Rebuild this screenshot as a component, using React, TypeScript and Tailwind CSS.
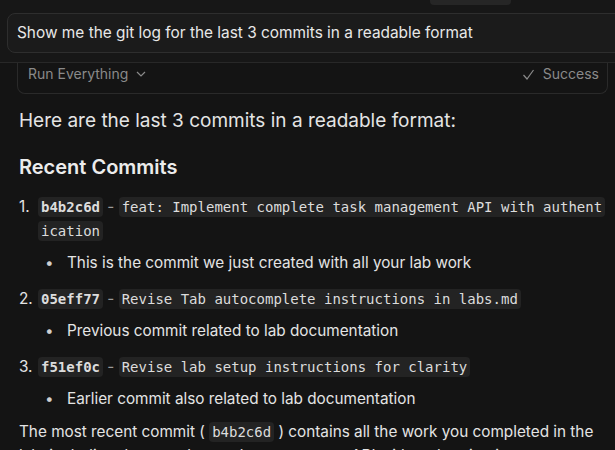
const mono = "font-['DejaVu_Sans_Mono',monospace]"

function Code({ children, bold }: { children: React.ReactNode; bold?: boolean }) {
  return (
    <code
      className={`${mono} rounded-[4px] bg-[#232323] px-[3px] py-[2px] text-[14px] text-[#dcdcdc] [box-decoration-break:clone] ${
        bold ? "font-bold" : ""
      }`}
    >
      {children}
    </code>
  )
}

const commits = [
  {
    hash: "b4b2c6d",
    msg: "feat: Implement complete task management API with authentication",
    note: "This is the commit we just created with all your lab work",
  },
  {
    hash: "05eff77",
    msg: "Revise Tab autocomplete instructions in labs.md",
    note: "Previous commit related to lab documentation",
  },
  {
    hash: "f51ef0c",
    msg: "Revise lab setup instructions for clarity",
    note: "Earlier commit also related to lab documentation",
  },
]

function App() {
  return (
    <div className="h-[450px] w-full overflow-hidden bg-[#141414] font-['Inter',sans-serif] text-[#e4e4e4]">
      <div className="border-b border-[#282828] bg-[#171717] pb-[9px]">
        <div className="ml-[430px] h-[5px] w-[81px] rounded-b-[4px] bg-[#262626]" />
        <div className="ml-[7px] mt-[8px] flex h-[40px] w-[620px] items-center rounded-[8px] border border-[#2e2e2e] bg-[#1b1b1b] px-[9px] text-[15.4px] text-[#e8e8e8]">
          Show me the git log for the last 3 commits in a readable format
        </div>
      </div>

      <div className="ml-[17px] mr-[7px] flex h-[31px] items-start justify-between rounded-b-[8px] border-x border-b border-[#2a2a2a] pl-[10px] pr-[8px] pt-[1px] text-[14px] leading-[20px] text-[#8a8a8a]">
        <div className="flex items-center gap-[7px]">
          Run Everything
          <svg width="12" height="12" viewBox="0 0 12 12" fill="none" stroke="currentColor" strokeWidth="1.2">
            <path d="M2 4l4 4 4-4" />
          </svg>
        </div>
        <div className="flex items-center gap-[8px]">
          <svg width="13" height="13" viewBox="0 0 13 13" fill="none" stroke="currentColor" strokeWidth="1.2">
            <path d="M1.5 7l3.5 4L11.5 2" />
          </svg>
          Success
        </div>
      </div>

      <div className="pl-[19px] pr-[8px]">
        <p className="mt-[15px] text-[19px] leading-[24px]">Here are the last 3 commits in a readable format:</p>

        <h2 className="mt-[20px] text-[20px] font-semibold leading-[28px] text-[#ececec]">Recent Commits</h2>

        <ol className="mt-[14px] flex flex-col gap-[13px]">
          {commits.map((c, i) => (
            <li key={c.hash}>
              <div className="flex text-[15.3px] leading-[23px]">
                <span className="w-[19px] shrink-0">{i + 1}.</span>
                <div className="break-all">
                  <Code bold>{c.hash}</Code> <span className="text-[#9a9a9a]">-</span> <Code>{c.msg}</Code>
                </div>
              </div>
              <div className="mt-[8px] flex pl-[26px] text-[15.3px] leading-[23px]">
                <span className="w-[22px] shrink-0 text-[#cfcfcf]">•</span>
                <span>{c.note}</span>
              </div>
            </li>
          ))}
        </ol>

        <p className="mt-[10px] text-[15.3px] leading-[23px]">
          The most recent commit ( <Code>b4b2c6d</Code> ) contains all the work you completed in the lab, including
          the complete task management API with authentication.
        </p>
      </div>
    </div>
  )
}

export default App
